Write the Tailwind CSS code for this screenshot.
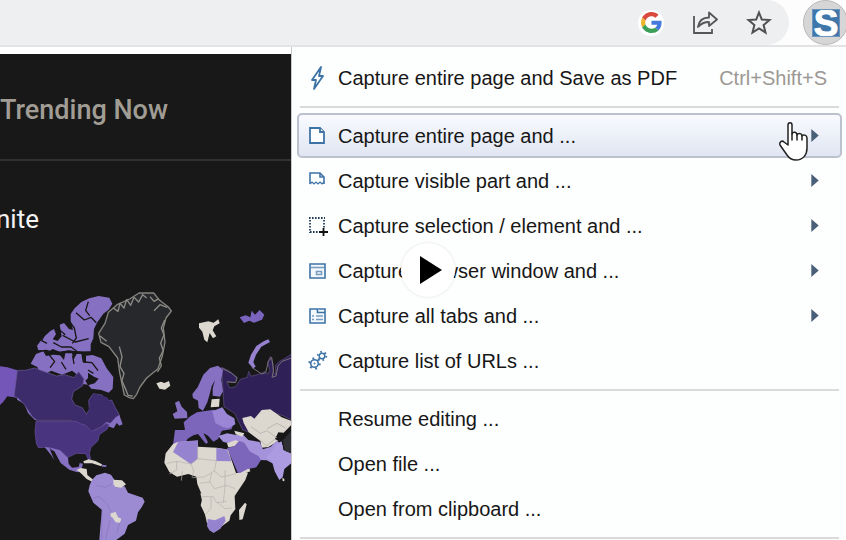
<!DOCTYPE html>
<html lang="en">
<head>
    <meta charset="UTF-8">
    <meta name="viewport" content="width=device-width, initial-scale=1.0">
    <title>Trending Now</title>
    <script src="https://cdn.jsdelivr.net/npm/@tailwindcss/browser@4"></script>
</head>
<body class="relative flex h-screen flex-col overflow-hidden bg-white font-['Liberation_Sans',Arial,sans-serif]">
    <!-- browser toolbar -->
    <header class="flex h-[47px] shrink-0 items-start border-b-2 border-[#e2e3e4] bg-[#fdfdfd]">
        <div class="flex h-[45px] flex-1 items-center justify-end gap-[28px] rounded-r-full bg-[#eeeff1] pr-[17px]">
            <button aria-label="Google" class="flex size-[26px] items-center justify-center rounded-full bg-white">
                <svg class="size-[21px]" viewBox="0 0 48 48">
                    <path fill="#d94a3d" d="M24 9.5c3.500 0 6.700 1.200 9.200 3.600l6.900-6.900C35.900 2.400 30.500 0 24 0 14.600 0 6.500 5.400 2.600 13.200l8 6.200C12.400 13.700 17.700 9.500 24 9.500z"/>
                    <path fill="#4479dd" d="M47 24.500c0-1.600-.2-3.100-.4-4.500H24v9h12.900c-.6 3-2.300 5.500-4.800 7.200l7.700 6C44.400 38 47 31.800 47 24.500z"/>
                    <path fill="#efb52b" d="M10.500 28.600c-.5-1.500-.8-3-.8-4.600s.3-3.100.8-4.600l-8-6.200C.9 16.500 0 20.100 0 24s.9 7.500 2.600 10.800z"/>
                    <path fill="#3c9f58" d="M24 48c6.500 0 11.900-2.100 15.900-5.800l-7.700-6c-2.200 1.500-4.900 2.300-8.200 2.300-6.300 0-11.600-4.200-13.500-9.900l-8 6.200C6.500 42.600 14.600 48 24 48z"/>
                </svg>
            </button>
            <button aria-label="Share">
                <svg class="size-[26px]" viewBox="0 0 26 26" fill="none" stroke="#575757" stroke-width="1.8">
                    <path d="M2 6v17h18v-4"/>
                    <path stroke-linejoin="round" d="M6 17C7 10 11 7.500 17 7.500V2.500L25 9.500l-8 6.500v-4C12 12 9 13.500 6 17z"/>
                </svg>
            </button>
            <button aria-label="Bookmark">
                <svg class="size-[26px]" viewBox="0 0 26 26" fill="none" stroke="#505050" stroke-width="2">
                    <path d="M13 2.500l2.800 7 7.700.5-5.900 5 1.900 7.500-6.500-4.100-6.500 4.100L8.400 15l-5.900-5 7.700-.5z"/>
                </svg>
            </button>
        </div>
        <div class="w-[57px] pl-[14px]">
            <button aria-label="Screenshot extension" class="flex size-[45px] items-center justify-center rounded-full border border-[#b9b9b9] bg-[#d6d6d6]">
                <svg class="size-[28px]" viewBox="0 0 28 28">
                    <path fill="#3f77aa" d="M0 0h28v28H0z"/>
                    <text x="14" y="27" text-anchor="middle" font-size="37" font-weight="bold" fill="#fff" stroke="#fff">S</text>
                    <path fill="none" stroke="#6b95bd" d="M.5.5h27v27H.5z"/>
                </svg>
            </button>
        </div>
    </header>

    <div class="flex min-h-0 flex-1">
        <!-- trends page -->
        <main class="flex min-w-0 flex-1 flex-col overflow-hidden border-t-[7px] border-white bg-[#181818] font-[Roboto,sans-serif]">
            <h1 class="flex h-[107px] shrink-0 items-center border-b-2 border-[#303030] pt-2 text-[27px] font-medium whitespace-nowrap text-[#a19d95]">Trending Now</h1>
            <h2 class="-ml-1 flex h-[112px] shrink-0 items-center pt-1 text-[26px] text-[#f2f2f2]">nite</h2>
            <svg class="mt-[7px] h-[260px] w-[292px] shrink-0" viewBox="0 0 876 780" stroke-linejoin="round">
                <!-- the americas -->
                <g>
                    <path fill="#8670c2" d="M268 55l28-7 32 5 9 18-11 18-16 12-18 26-10 20-2 28-8 18 0 21-26 2-40-5-26 4-22-8-10 7-33-3-4-14 18-24 22-20 11-6 6 16-10 15 15 5 12-14-6-35 13-5 15 18 12 3-7-28 0-20 12-17 20-19zM108 222l22-8 8 14 22-4 20 2 12 14 4-20 20 0 4 20 10-18 14 0 4 24 10 3 0-22 20-2 26 10 16 30 20 26-2 35-12 12-22-8-30-4-10-12-16-2-2-18-30-22-30 12-32-12-14 8-22-5-6-14-20-10z"/>
                    <path fill="none" stroke="#181818" stroke-width="4" d="M104 214l34-3 30 8 34-5 74 3M205 120l18 24 6 30-12 16M228 98l25 22 20-8 16 16M265 65l-8 26 12 16M188 166l38 20 40-10M160 188l24 13 29 0 17 12M148 225l16 20-14 18M184 246l14 22M218 228l4 24M250 246l26 2 18 24M264 270l16 10M135 160l-10 22 16 8M176 148l20 16"/>
                    <path fill="#7356b8" d="M0 259l22 3 30 9v82l-30-4-12 16-10 10z"/>
                    <path fill="#8670c2" d="M52 350l22 16 14 26 24 30-8-3-20-20-11-28-22-12z"/>
                    <path fill="#3d2c6b" stroke="#6c5a9c" stroke-width="2" d="M52 271l24 0 28-7 26 10 40 14 24-4 28 9 14-18 16 22-4 20-28 18-5 22 10 18 22 8 12 20 9-15-2-27 14-20 26 4 14 18 15-3 10 22 12 20 2 18-26 8-27 18-13-2-22 16-19 2 8-12-18-10-16-12-12-7-102 0-14-10-25-37-19-20-12-4z"/>
                    <path fill="#3d2c6b" d="M280 340l42 12 26 44-48 26-62 20-24-20 48-16z"/>
                    <path fill="#181818" d="M264 278l18 12 14 6-12 14-20 6-8-14 8-8z"/>
                    <path fill="#8670c2" d="M300 444l19-18 12 4 16-18 11-7 10 28-10 4-8-8-9 16-17-6-4 10z"/>
                    <path fill="#49357f" stroke="#66509d" stroke-width="2" d="M108 424h120l13 7 16 5 18 18 20-8 24-16 8 4-6 14-23 16-4 18-21 20-5 18 4 17-6 3-9-19-28-1-25 12-24-21-21 0-26-9-18 1-6-13-4-34z"/>
                    <path fill="#8670c2" d="M134 501l19 2 27 8 24 22 2 18 10 12 20-2 3-12 10 2-6 21-11 5-24-8-26-20-18-34-17-14 16 40-10-16z"/>
                    <path fill="#dcd8d0" d="M230 570l12-6 18 3 2 18 14 11 6 4-4 6-18-9-18-18zM250 544l16-6 20 5 20 10-2 6-28-9-24 0z"/>
                    <path fill="#8670c2" d="M306 554l14 2-2 5-12-1z"/>
                    <path fill="#9c8ad2" d="M276 600l13-14 26-8 18 6 9 14 6 24 26-3 10 19 44 15 6 12-10 18-10 14-6 25-24 13-10 26-25 19h-51l3-40 5-50-26-22-15-34 4-18z"/>
                    <path fill="none" stroke="#8774be" stroke-width="2" d="M306 690l-1 90M290 616l26 6 20-10M280 655l20-8M296 650l24 20 14 26M330 720l-14 60M360 726l-10 34"/>
                    <path fill="#dcd8d0" d="M340 599l26 2 12 12-14 10-18-2-6-9zM332 700l15-4 7 16 10 4-4 12-13-1-9-14-6-4z"/>
                    <path fill="#26282b" stroke="#85847f" stroke-width="4" d="M296 160l19-30 10-33 28-24 36-16 28-18 44 0 18 22 26 20 9 12-16 21-8 30 5 42-8 42-13 38-34 28-20 27-10 22-10 13-12-3-15-8-14-67-6-44-26-34-24-13z"/>
                    <path fill="none" stroke="#8d8b86" stroke-width="4" d="M340 84l14 10 6-24 12 14 8-26 12 18 10-24 14 14 12-22 12 10M450 50l12 14 14-8M462 92l18-18 22 8M494 120l-10 24 8 20-10 26 8 22-12 22 6 24-12 18M358 200l8 30-6 30 12 20-6 22 10 24M300 168l20 16M374 320l10 26 14 2"/>
                </g>
                <!-- europe, africa and asia -->
                <g transform="translate(435 0)">
                    <path fill="#dcd8d0" d="M162 130l28-6 16 4 14-10 4 12-16 9-5 12 11 18-10 6-10-16-7 28-9-8-6-24-10-12zM34 310l14-5 10 4 14-6 4 14-16 12-17-3z"/>
                    <path fill="#7b64bd" d="M284 112l18-6 14 6 4-20 10 12 14-14 14 14-7 15-24 9-14-6-16 7z"/>
                    <path fill="#9682cf" d="M310 248l8-24 16-26 22-14 14-6 5 8-26 14-16 24-8 22 7 14-8 5z"/>
                    <path fill="#2f2158" stroke="#605080" stroke-width="2" d="M230 262l24 12 23 18-8 15-24-3 9 20 18-4 14-22 21-6 4-18 7 15 22-6 20-8 8 8 7-12-7-22 8-20 8 22 0 28 8 4 0-28 10-10 18-10 22-14v200l-28-14-32-10-18 8-3 18-28 9-18 4-4 20-18-6-24-50-32-20z"/>
                    <path fill="none" stroke="#777078" stroke-width="3" d="M232 265l28 15 16 14-4 14-24-2M320 262l30 20 12-4 8-34 10-12 6 40-5 20 12-4 6-30 12-14 34-12"/>
                    <path fill="#8670c2" d="M142 342l16-20 17-38 20-20 24-7 15 12-5 30 5 35-9 16-22-3 0-22 7-24-10 18-6 24-7 24-13 25-13-8-2-22-15-8zM90 368l12-6 8 18 16 16 1 18-38 2-6-14 14-8z"/>
                    <path fill="#7c66bc" d="M90 450l30 0-4-23 20-18 20-12 50-8 28 11 12 22 19 12-6 14-28 4-12 25-14 8-16-18-14-8 14 28-6 5-24-30-14 4-17 10-12 22-10 8-23-4z"/>
                    <path fill="#9a86d4" d="M202 394l30-12 14 20 22 13 3 18-22 12-16-4-22-12z"/>
                    <path fill="#dcd8d0" d="M200 358l24-2-2 24-25 2z"/>
                    <path fill="#dcd8d0" d="M292 414l26-6 10 8 22-26 26-2 34 24 28 10v14l-22 22-16-1-10 20 10 6-30 18-20 2-4-20-35-26-15-28z"/>
                    <path fill="none" stroke="#aca8a2" stroke-width="2" d="M318 440l28 20 20-8 30 22M366 446l30-16 26 14M344 478l20 20 25-20"/>
                    <path fill="#a492da" d="M220 468l26-8 28 5 22 1 14 14 34 6 10 22 23-8 18-18 18 14 3 22-13 20-10 18-28-15-38-2-22-24-18-30-26 8-27-8z"/>
                    <path fill="#dcd8d0" d="M246 490l24-9 12 2-12 16-20 3zM268 452l30 8-6 10-20-7zM280 564l30-10 6 20-30 12z"/>
                    <path fill="#7c66bc" d="M246 504l22-5 14-16 16 5 16 26 26 14 8 12-14 22-26 5-28 15z"/>
                    <path fill="#ac9be0" d="M376 520l18-28 16-8 4 25 26 12v28l-22 18-5 25-10 8-14-26-8-30-18-10z"/>
                    <path fill="#dcd8d0" d="M98 486l61-4v18l56 3 34 6 24 70 36-1-8 22-32 48 2 40-14 18-4 16-30 22-32-18-24-50 6-26-16-38-3-22-24-8-34 8-23-14-15-28 4-28 22-28z"/>
                    <path fill="#9683cf" d="M100 485l59-4-1 56-20 16-54-37zM214 504l32 4 14 36-46-1z"/>
                    <path fill="#dcd8d0" d="M166 640l94 20-8 60-66 10z"/>
                    <path fill="#9683cf" d="M186 738l2-21 22 4 28-13 4 14-16 24-20 13-13-8z"/>
                    <path fill="none" stroke="#b5b1aa" stroke-width="2" d="M65 550l31-6 42 8 8 20-5 20M95 545v25l-22 12M112 574l-3 28M138 552l20-16 56 6M158 500v36M214 543l-6 30-30 18-36 2M208 573l22 18 44-10M164 610l30-4 6-26M194 606l14 20 38-10 24 10M170 650l35 0 10 18 30-4M198 650v35l-16 18M218 668l22 18 20-2M240 570v50l-5 48"/>
                    <path fill="#dcd8d0" d="M300 668l5 5-12 45-10 2-1-30zM412 594l6 2 0 8-5-1z"/>
                    <path fill="#2d2f32" d="M414 480l25-28v68l-20-8z"/>
                </g>
            </svg>
        </main>

        <!-- extension popup -->
        <nav class="w-[555px] shrink-0 border-l border-[#c8c8c8] bg-[#fdfefe] pt-2 pr-1 pl-[5px] text-[20px] text-[#171717]">
            <button class="flex h-[45px] w-full items-center gap-[10px] pr-[15px] pl-[10px] text-left whitespace-nowrap">
                <svg class="h-[24px] w-[21px]" viewBox="0 0 21 24" fill="none" stroke="#3e73a6" stroke-width="1.800" stroke-linejoin="round"><path d="M14 1L5 14h4L7 23l9-13h-4z"/></svg>
                Capture entire page and Save as PDF
                <span class="ml-auto text-[#9c9893]">Ctrl+Shift+S</span>
            </button>
            <hr class="mx-[3px] mt-[6px] mb-[5px] border-t-2 border-[#dadada]">
            <button class="flex h-[45px] w-full items-center gap-[10px] rounded-[5px] border-2 border-[#bcc2cd] bg-linear-to-b from-[#f8faff] to-[#e1e6f2] pr-[21px] pl-2 text-left">
                <svg class="size-[21px]" viewBox="0 0 21 21" fill="#fff" stroke="#3e73a6" stroke-width="1.800"><path d="M3 3h10l4 4v11H3z"/><path d="M13 3v4h4"/></svg>
                Capture entire page and ...
                <svg class="ml-auto h-[13px] w-2" viewBox="0 0 8 14" fill="#4a6078"><path d="M0 0l8 7-8 7z"/></svg>
            </button>
            <button class="flex h-[45px] w-full items-center gap-[10px] pr-[23px] pl-[10px] text-left">
                <svg class="size-[21px]" viewBox="0 0 21 21" fill="none" stroke="#3e73a6" stroke-width="1.600"><path d="M3 14V3h10l4 4v7"/><path d="M13 3v4h4"/><path stroke-width="1.200" d="M3 14l2-2 2 2 2-2 2 2 2-2 2 2 2-2"/></svg>
                Capture visible part and ...
                <svg class="ml-auto h-[13px] w-2" viewBox="0 0 8 14" fill="#4a6078"><path d="M0 0l8 7-8 7z"/></svg>
            </button>
            <button class="flex h-[45px] w-full items-center gap-[10px] pr-[23px] pl-[10px] text-left">
                <svg class="size-[21px]" viewBox="0 0 21 21" fill="none" stroke="#243d5b" stroke-width="1.800"><path stroke-dasharray="1.600 1.400" d="M2 3h16M3 5v13M17 5v8M3 17h9"/><path stroke="#111" d="M16.500 13v8M12 17h9"/></svg>
                Capture selection / element and ...
                <svg class="ml-auto h-[13px] w-2" viewBox="0 0 8 14" fill="#4a6078"><path d="M0 0l8 7-8 7z"/></svg>
            </button>
            <button class="flex h-[45px] w-full items-center gap-[10px] pr-[23px] pl-[10px] text-left">
                <svg class="size-[21px]" viewBox="0 0 21 21" fill="#f3f8fd" stroke="#3e73a6" stroke-width="1.600"><path d="M3 4h15v14H3z"/><path stroke="#789dc0" d="M4 7.500h13"/><path stroke="#789dc0" d="M9.500 11.500h5v3h-5z"/></svg>
                Capture browser window and ...
                <svg class="ml-auto h-[13px] w-2" viewBox="0 0 8 14" fill="#4a6078"><path d="M0 0l8 7-8 7z"/></svg>
            </button>
            <button class="flex h-[45px] w-full items-center gap-[10px] pr-[23px] pl-[10px] text-left">
                <svg class="size-[21px]" viewBox="0 0 21 21" fill="#f3f8fd" stroke="#3e73a6" stroke-width="1.600"><path d="M3 4h15v14H3z"/><path d="M10.500 4v3.500H18"/><path stroke="#789dc0" d="M5 11h2M9 11h7M5 14.500h2M9 14.500h7"/></svg>
                Capture all tabs and ...
                <svg class="ml-auto h-[13px] w-2" viewBox="0 0 8 14" fill="#4a6078"><path d="M0 0l8 7-8 7z"/></svg>
            </button>
            <button class="flex h-[45px] w-full items-center gap-[10px] pl-[10px] text-left">
                <svg class="size-[21px]" viewBox="0 0 21 21" fill="none" stroke="#3e73a6">
                    <circle cx="7.500" cy="13.500" r="3.800" stroke-width="1.600"/>
                    <circle cx="7.500" cy="13.500" r="5.200" stroke-width="2" stroke-dasharray="1.800 3.645"/>
                    <circle cx="7.500" cy="13.500" r=".6"/>
                    <circle cx="15" cy="6" r="2.800" stroke-width="1.500"/>
                    <circle cx="15" cy="6" r="4.200" stroke-width="2" stroke-dasharray="1.500 2.898"/>
                </svg>
                Capture list of URLs ...
            </button>
            <hr class="mx-[3px] mt-[6px] mb-[5px] border-t-2 border-[#dadada]">
            <button class="flex h-[45px] w-full items-center pl-[41px] text-left">Resume editing ...</button>
            <button class="flex h-[45px] w-full items-center pl-[41px] text-left">Open file ...</button>
            <button class="flex h-[45px] w-full items-center pl-[41px] text-left">Open from clipboard ...</button>
            <hr class="mx-[3px] mt-[6px] mb-[5px] border-t-2 border-[#dadada]">
        </nav>
    </div>

    <!-- mouse pointer -->
    <svg class="absolute top-[121px] right-[37px] h-[40px] w-[30px]" viewBox="0 0 30 40" fill="#fff" stroke="#222" stroke-width="1.500" stroke-linejoin="round" stroke-linecap="round">
        <path d="M9 24V4c0-3 4-3 4 0v9c1-3 5-2 5 1 1-2 5-2 5 1 1-2 5-1 5 2v10c0 7-4 12-11 12-5 0-7-2-9-5L1 24c-1-3 2-5 4-3z"/>
        <path d="M13 13v6M18 14v5M23 15v4"/>
    </svg>

    <!-- video play button -->
    <button aria-label="Play" class="absolute top-[243px] left-[401px] flex size-[54px] items-center justify-center rounded-full bg-white shadow-[0_0_3px_#0002]">
        <svg class="ml-1 h-[28px] w-[23px]" viewBox="0 0 23 28"><path d="M1 0l22 14L1 28z"/></svg>
    </button>
</body>
</html>
